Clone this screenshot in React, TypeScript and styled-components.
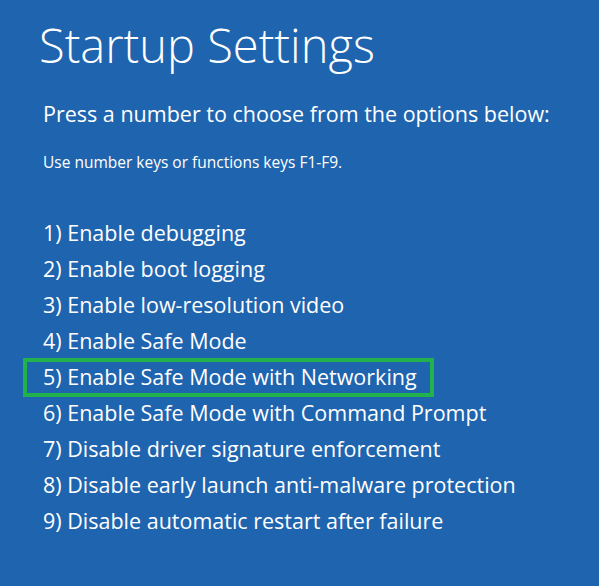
import styled, { createGlobalStyle } from "styled-components";

const Global = createGlobalStyle`
  html, body {
    margin: 0;
    padding: 0;
    background: #1f64ae;
  }
`;

const Screen = styled.div`
  width: 599px;
  height: 586px;
  box-sizing: border-box;
  background: #1f64ae;
  color: #ffffff;
  font-family: "Open Sans", "Noto Sans", sans-serif;
  padding: 15px 0 0 39px;
  overflow: hidden;
  white-space: nowrap;
`;

const Title = styled.h1`
  margin: 0;
  font-size: 47px;
  font-weight: 300;
  line-height: 60px;
`;

const Lead = styled.p`
  margin: 25px 0 0 4px;
  font-size: 21.5px;
  line-height: 28px;
`;

const Hint = styled.p`
  margin: 24px 0 0 4px;
  font-size: 15.5px;
  line-height: 20px;
`;

const Options = styled.ol`
  list-style: none;
  margin: 43px 0 0 0;
  padding: 0;
  width: 395px;
`;

const Option = styled.li<{ $picked?: boolean }>`
  font-size: 21.5px;
  line-height: 28px;
  padding: ${(p) => (p.$picked ? "1.5px 0 1.5px 16px" : "4px 0 4px 4px")};
  margin: ${(p) => (p.$picked ? "-1.5px 0 -1.5px -16px" : "0")};
  border: ${(p) => (p.$picked ? "4px solid #21b24b" : "0")};
`;

const options = [
  "Enable debugging",
  "Enable boot logging",
  "Enable low-resolution video",
  "Enable Safe Mode",
  "Enable Safe Mode with Networking",
  "Enable Safe Mode with Command Prompt",
  "Disable driver signature enforcement",
  "Disable early launch anti-malware protection",
  "Disable automatic restart after failure",
];

export default function App() {
  return (
    <>
      <Global />
      <Screen>
        <Title>Startup Settings</Title>
        <Lead>Press a number to choose from the options below:</Lead>
        <Hint>Use number keys or functions keys F1-F9.</Hint>
        <Options>
          {options.map((o, i) => (
            <Option key={o} $picked={i === 4}>
              {i + 1}) {o}
            </Option>
          ))}
        </Options>
      </Screen>
    </>
  );
}
